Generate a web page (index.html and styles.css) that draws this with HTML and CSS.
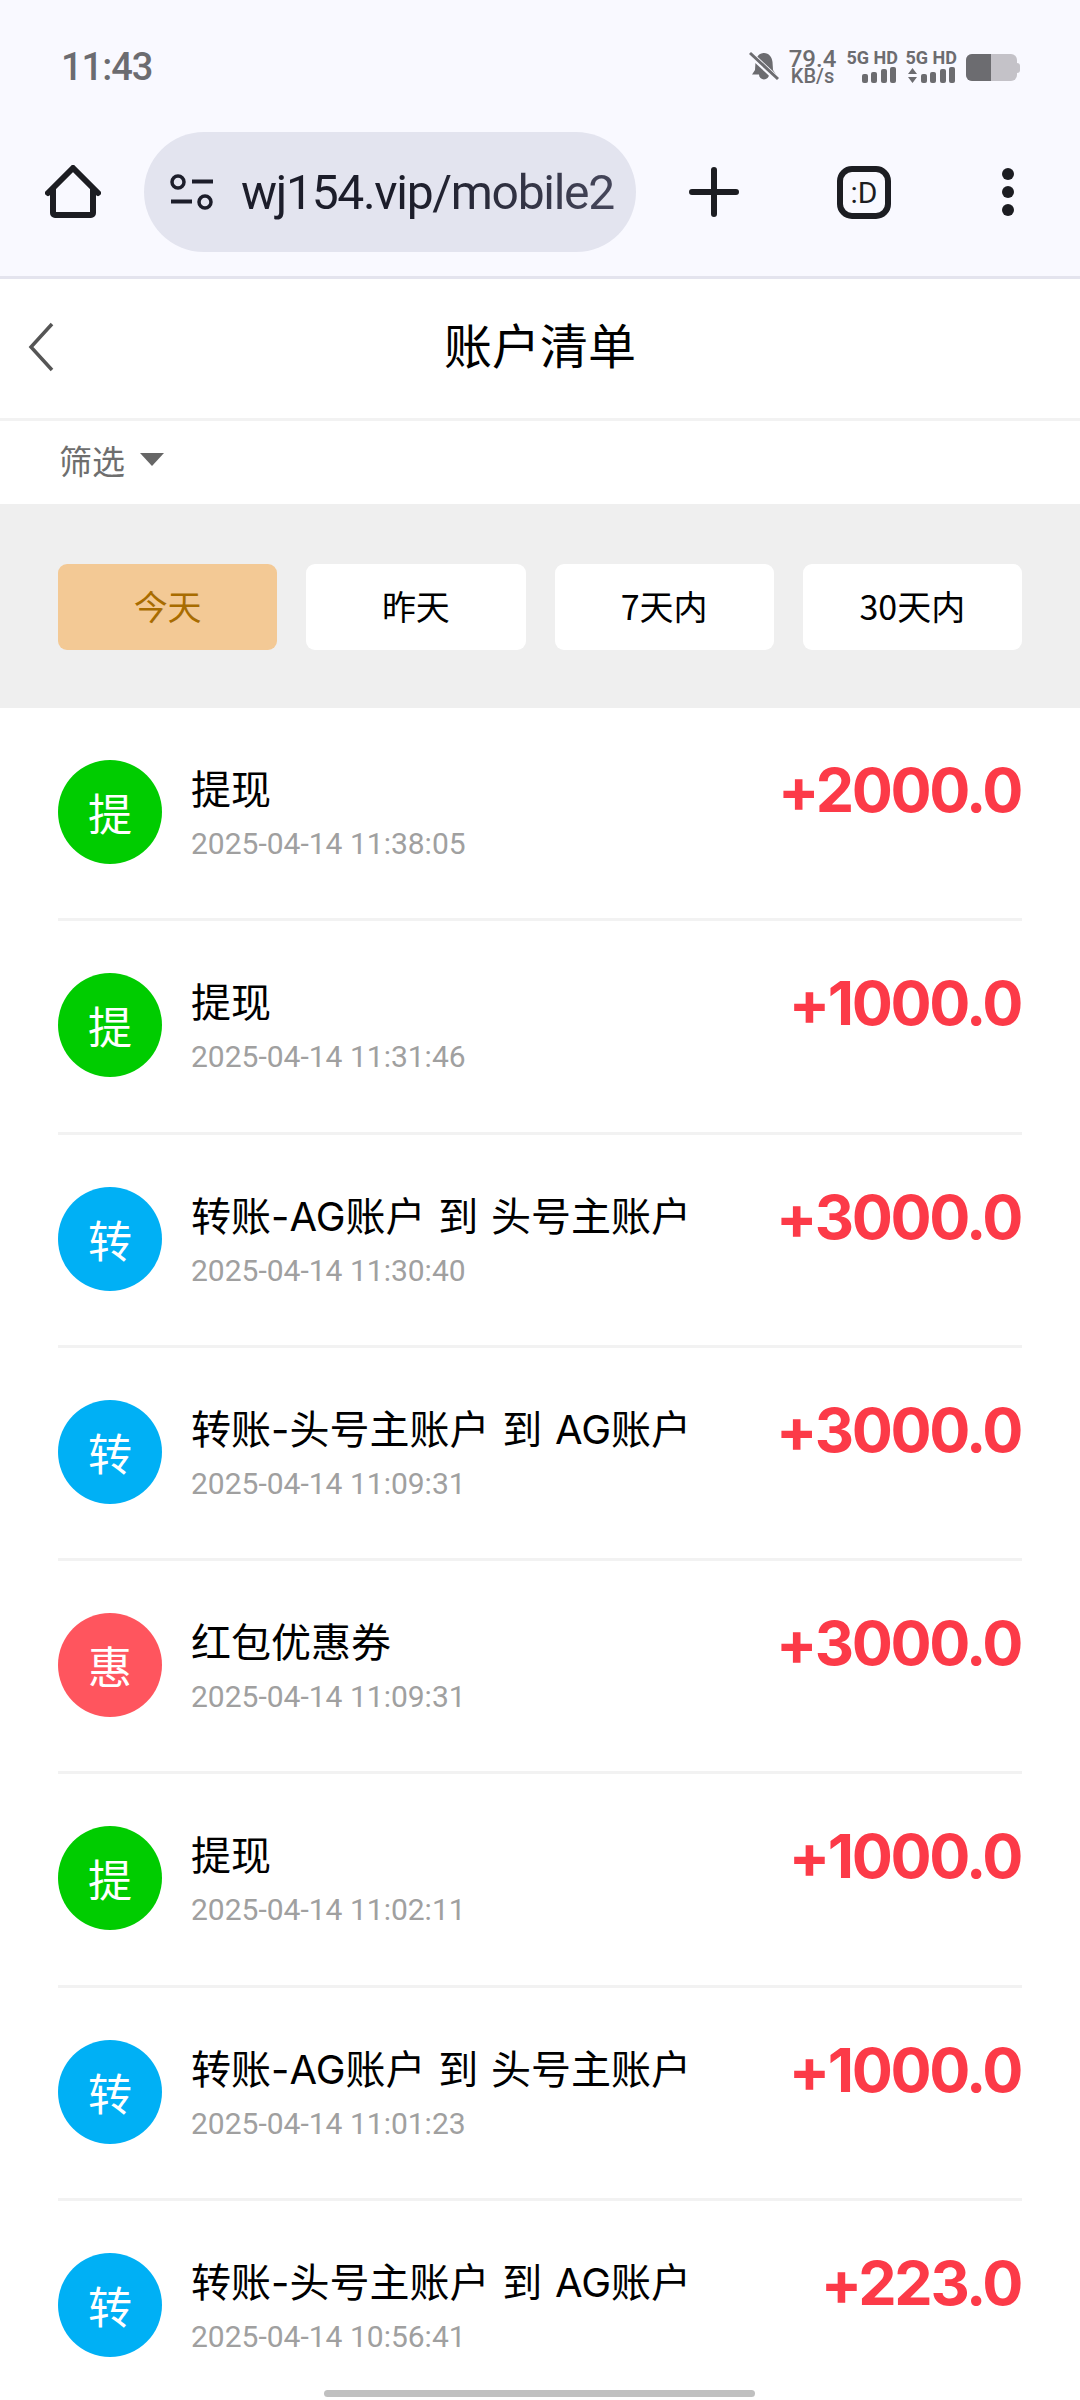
FILE: index.html
```html
<!DOCTYPE html>
<html lang="zh-CN">
<head>
    <meta charset="UTF-8">
    <meta name="viewport" content="width=device-width, initial-scale=1.0">
    <title>账户清单</title>
    <link rel="stylesheet" href="styles.css">
</head>
<body>
    <div class="browser-chrome">
        <div class="status-bar">
            <span class="status-time">11:43</span>
            <div class="status-icons">
                <svg class="bell" width="30" height="30" viewBox="0 0 30 30">
                    <path d="M15 2c5 0 8 4 8.500 9l.5 8 3 4.500H20a5 5 0 0 1-10 0H3l3-4.500.5-8C7 6 10 2 15 2z" fill="#6c6c70"/>
                    <path d="M1 3l27 25" stroke="#f9f9ff" stroke-width="6"/>
                    <path d="M1 2l28 26" stroke="#6c6c70" stroke-width="3"/>
                </svg>
                <div class="net-speed">
                    <span class="speed-value">79.4</span>
                    <span class="speed-unit">KB/s</span>
                </div>
                <div class="sim">
                    <span class="sim-label">5G HD</span>
                    <div class="signal">
                        <i class="bar b1"></i><i class="bar b2"></i><i class="bar b3"></i><i class="bar b4"></i>
                    </div>
                </div>
                <div class="sim">
                    <span class="sim-label">5G HD</span>
                    <div class="signal">
                        <svg class="updown" width="9" height="15" viewBox="0 0 9 15">
                            <path d="M4.500 0L9 6H0zM4.500 15L0 9h9z" fill="#6c6c70"/>
                        </svg>
                        <i class="bar b1"></i><i class="bar b2"></i><i class="bar b3"></i><i class="bar b4"></i>
                    </div>
                </div>
                <div class="battery">
                    <div class="battery-body"><div class="battery-level"></div></div>
                    <div class="battery-tip"></div>
                </div>
            </div>
        </div>
        <div class="toolbar">
            <svg class="home-icon" width="56" height="54" viewBox="0 0 56 54">
                <path d="M3 28L28 3l25 25M8 24v24a2 2 0 0 0 2 2h36a2 2 0 0 0 2-2V24" fill="none" stroke="#1c1d22" stroke-width="6" stroke-linecap="round" stroke-linejoin="round"/>
            </svg>
            <div class="url-pill">
                <svg class="tune-icon" width="46" height="40" viewBox="0 0 46 40">
                    <circle cx="9" cy="10" r="6" fill="none" stroke="#1c1d2a" stroke-width="3.500"/>
                    <path d="M23 9.500h21M2 29.500h21" stroke="#1c1d2a" stroke-width="4"/>
                    <circle cx="36" cy="30" r="6" fill="none" stroke="#1c1d2a" stroke-width="3.500"/>
                </svg>
                <span class="url-text">wj154.vip/mobile2</span>
            </div>
            <svg class="plus-icon" width="50" height="50" viewBox="0 0 50 50">
                <path d="M25 3v44M3 25h44" stroke="#1c1d22" stroke-width="6" stroke-linecap="round"/>
            </svg>
            <div class="tab-switch">:D</div>
            <div class="menu-dots"><i></i><i></i><i></i></div>
        </div>
    </div>

    <div class="page-header">
        <svg class="back-icon" width="26" height="50" viewBox="0 0 26 50">
            <path d="M24 2L3 25l21 23" fill="none" stroke="#555" stroke-width="3.500"/>
        </svg>
        <h1 class="page-title">账户清单</h1>
    </div>

    <div class="filter-row">
        <span>筛选</span>
        <i class="caret"></i>
    </div>

    <div class="date-tabs">
        <div class="date-tab active">今天</div>
        <div class="date-tab">昨天</div>
        <div class="date-tab">7天内</div>
        <div class="date-tab">30天内</div>
    </div>

    <div class="record-list">
        <div class="record">
            <div class="record-icon green">提</div>
            <div class="record-info">
                <div class="record-title">提现</div>
                <div class="record-time">2025-04-14 11:38:05</div>
            </div>
            <div class="record-amount">+2000.0</div>
        </div>
        <div class="record">
            <div class="record-icon green">提</div>
            <div class="record-info">
                <div class="record-title">提现</div>
                <div class="record-time">2025-04-14 11:31:46</div>
            </div>
            <div class="record-amount">+1000.0</div>
        </div>
        <div class="record">
            <div class="record-icon blue">转</div>
            <div class="record-info">
                <div class="record-title">转账-AG账户 到 头号主账户</div>
                <div class="record-time">2025-04-14 11:30:40</div>
            </div>
            <div class="record-amount">+3000.0</div>
        </div>
        <div class="record">
            <div class="record-icon blue">转</div>
            <div class="record-info">
                <div class="record-title">转账-头号主账户 到 AG账户</div>
                <div class="record-time">2025-04-14 11:09:31</div>
            </div>
            <div class="record-amount">+3000.0</div>
        </div>
        <div class="record">
            <div class="record-icon red">惠</div>
            <div class="record-info">
                <div class="record-title">红包优惠券</div>
                <div class="record-time">2025-04-14 11:09:31</div>
            </div>
            <div class="record-amount">+3000.0</div>
        </div>
        <div class="record">
            <div class="record-icon green">提</div>
            <div class="record-info">
                <div class="record-title">提现</div>
                <div class="record-time">2025-04-14 11:02:11</div>
            </div>
            <div class="record-amount">+1000.0</div>
        </div>
        <div class="record">
            <div class="record-icon blue">转</div>
            <div class="record-info">
                <div class="record-title">转账-AG账户 到 头号主账户</div>
                <div class="record-time">2025-04-14 11:01:23</div>
            </div>
            <div class="record-amount">+1000.0</div>
        </div>
        <div class="record">
            <div class="record-icon blue">转</div>
            <div class="record-info">
                <div class="record-title">转账-头号主账户 到 AG账户</div>
                <div class="record-time">2025-04-14 10:56:41</div>
            </div>
            <div class="record-amount">+223.0</div>
        </div>
    </div>

    <div class="home-bar"></div>
</body>
</html>
```

FILE: styles.css
```css
:root {
    --chrome-bg: #f9f9ff;
    --chrome-ink: #1c1d22;
    --status-ink: #6c6c70;
    --line-color: #f2f2f2;
    --amount-color: #fc3a48;
}

* {
    box-sizing: border-box;
}

body {
    position: relative;
    margin: 0;
    width: 1080px;
    height: 2400px;
    overflow: hidden;
    background: #ffffff;
    color: #000000;
    font-family: "Noto Sans CJK SC", Roboto, sans-serif;
}

/* browser chrome */
.browser-chrome {
    background: var(--chrome-bg);
    border-bottom: 3px solid #e4e4ee;
}

.status-bar {
    height: 132px;
    padding: 48px 60px 0 61px;
    display: flex;
    justify-content: space-between;
    align-items: flex-start;
}

.status-time {
    font-family: Roboto, sans-serif;
    font-size: 38px;
    font-weight: 500;
    line-height: 38px;
    letter-spacing: -1px;
    color: var(--status-ink);
}

.status-icons {
    margin-top: 1px;
    display: flex;
    align-items: flex-start;
    color: var(--status-ink);
    font-family: Roboto, sans-serif;
}

.bell {
    margin: 2px 11px 0 0;
}

.net-speed {
    width: 45px;
    margin-right: 13px;
    display: flex;
    flex-direction: column;
    align-items: center;
    font-weight: 500;
}

.speed-value {
    font-size: 24px;
    line-height: 20px;
}

.speed-unit {
    font-size: 20px;
    line-height: 15px;
}

.sim {
    width: 50px;
    margin-right: 9px;
    display: flex;
    flex-direction: column;
    align-items: flex-end;
}

.sim-label {
    font-size: 18px;
    font-weight: 700;
    line-height: 17px;
    white-space: nowrap;
}

.signal {
    height: 16px;
    margin-top: 1px;
    padding-right: 2px;
    display: flex;
    align-items: flex-end;
    gap: 3.4px;
}

.bar {
    width: 6px;
    border-radius: 2px;
    background: var(--status-ink);
}

.b1 { height: 9px; }
.b2 { height: 11px; }
.b3 { height: 14px; }
.b4 { height: 16px; }

.battery {
    margin-top: 5px;
    display: flex;
    align-items: center;
}

.battery-body {
    width: 51px;
    height: 27px;
    border-radius: 6px;
    overflow: hidden;
    background: #c4c2c8;
}

.battery-level {
    width: 25px;
    height: 100%;
    background: var(--status-ink);
}

.battery-tip {
    width: 3px;
    height: 10px;
    border-radius: 0 3px 3px 0;
    background: #c4c2c8;
}

.toolbar {
    height: 144px;
    padding: 0 66px 24px 45px;
    display: flex;
    align-items: center;
}

.home-icon {
    flex: none;
    margin-right: 43px;
}

.url-pill {
    flex: none;
    width: 492px;
    height: 120px;
    padding: 0 10px 0 25px;
    border-radius: 60px;
    background: #e3e4ef;
    display: flex;
    align-items: center;
    gap: 26px;
}

.tune-icon {
    flex: none;
}

.url-text {
    font-family: Roboto, sans-serif;
    font-size: 48px;
    letter-spacing: -1.3px;
    white-space: nowrap;
    color: transparent;
    background: linear-gradient(90deg, #1c1d2a 45%, #45465a 100%);
    -webkit-background-clip: text;
    background-clip: text;
}

.plus-icon {
    flex: none;
    margin-left: 53px;
}

.tab-switch {
    flex: none;
    width: 54px;
    height: 53px;
    margin-left: 98px;
    border: 6px solid var(--chrome-ink);
    border-radius: 15px;
    display: flex;
    align-items: center;
    justify-content: center;
    font-family: Roboto, sans-serif;
    font-size: 30px;
    color: var(--chrome-ink);
}

.menu-dots {
    flex: none;
    margin-left: 111px;
    display: flex;
    flex-direction: column;
    gap: 6px;
}

.menu-dots i {
    width: 12px;
    height: 12px;
    border-radius: 50%;
    background: var(--chrome-ink);
}

/* page */
.page-header {
    height: 142px;
    padding: 0 0 0 28px;
    border-bottom: 3px solid var(--line-color);
    display: grid;
    grid-template-columns: 1fr auto 1fr;
    align-items: center;
}

.back-icon {
    margin-top: -4px;
}

.page-title {
    margin: -12px 28px 0 0;
    font-size: 48px;
    font-weight: 400;
    line-height: 60px;
}

.filter-row {
    height: 83px;
    padding: 0 0 6px 59px;
    display: flex;
    align-items: center;
    gap: 15px;
    font-size: 33px;
    color: #6e6e6e;
}

.caret {
    width: 0;
    height: 0;
    border-left: 12px solid transparent;
    border-right: 12px solid transparent;
    border-top: 13px solid #666666;
}

.date-tabs {
    height: 204px;
    padding: 60px 58px 58px;
    background: #efefef;
    display: grid;
    grid-template-columns: repeat(4, 1fr);
    gap: 29px;
}

.date-tab {
    padding-bottom: 3px;
    border-radius: 9px;
    background: #ffffff;
    display: flex;
    align-items: center;
    justify-content: center;
    font-size: 34px;
}

.date-tab.active {
    background: #f3c995;
    color: #a86c00;
}

.record-list {
    padding: 0 58px;
}

.record {
    height: 213.25px;
    padding-top: 52px;
    border-bottom: 3px solid var(--line-color);
    display: flex;
    align-items: flex-start;
}

.record:last-child {
    border-bottom: none;
}

.record-icon {
    flex: none;
    width: 104px;
    height: 104px;
    margin-right: 29px;
    border-radius: 50%;
    display: flex;
    align-items: center;
    justify-content: center;
    font-size: 44px;
    color: #ffffff;
}

.green { background: #00cc00; }
.blue { background: #00b0f5; }
.red { background: #ff555e; }

.record-info {
    flex: 1;
    min-width: 0;
}

.record-title {
    height: 52px;
    margin-top: 4px;
    font-family: Inter, "Noto Sans CJK SC", sans-serif;
    font-size: 40px;
    line-height: 52px;
    word-spacing: 1.5px;
    white-space: nowrap;
}

.record-time {
    margin-top: 8px;
    font-family: Roboto, sans-serif;
    font-size: 30px;
    line-height: 40px;
    color: #a0a0a0;
}

.record-amount {
    font-family: Inter, sans-serif;
    font-size: 61px;
    font-weight: 700;
    line-height: 60px;
    letter-spacing: -2.4px;
    margin-right: 1px;
    color: var(--amount-color);
}

.home-bar {
    position: absolute;
    left: 324px;
    bottom: 3px;
    width: 431px;
    height: 7px;
    border-radius: 4px;
    background: #c0c0c0;
}
```
